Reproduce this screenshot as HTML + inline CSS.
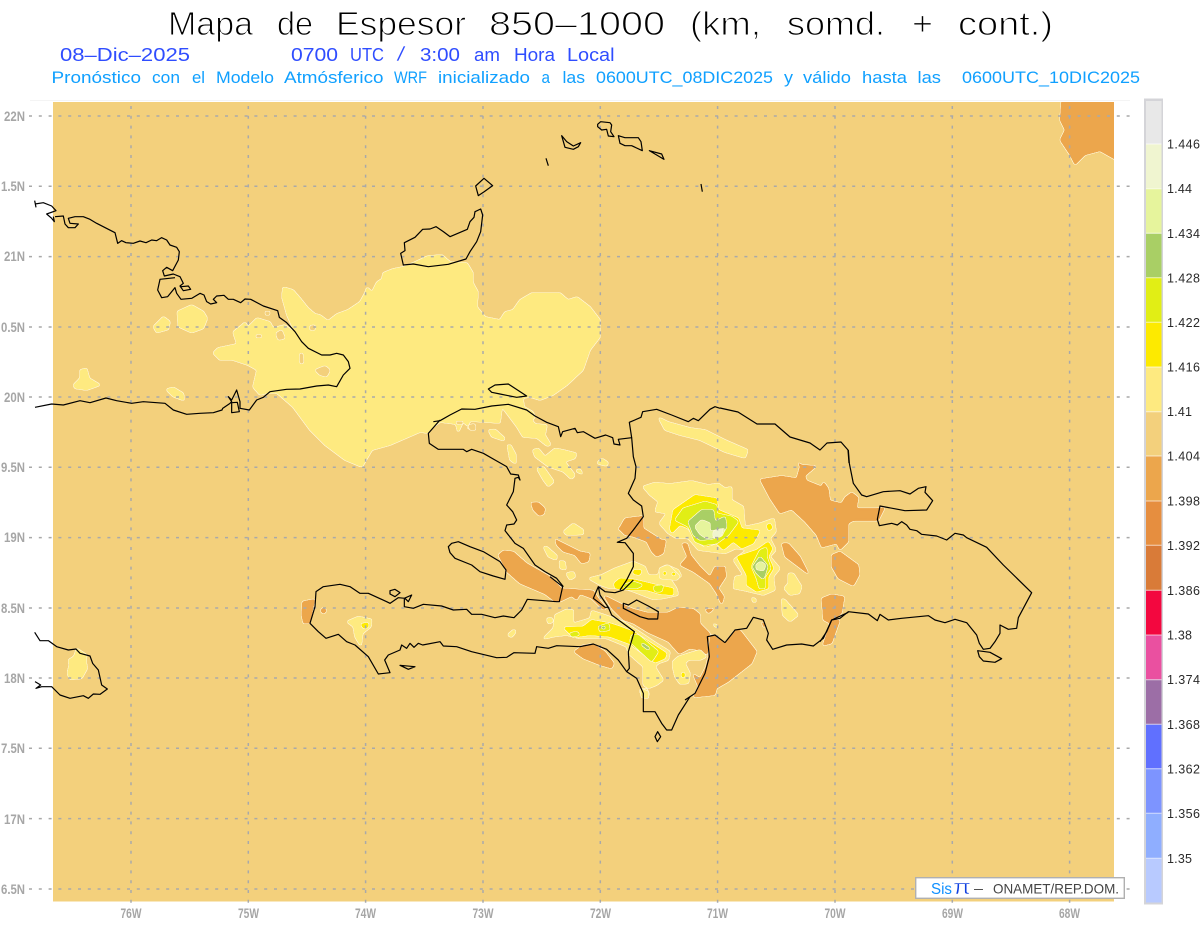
<!DOCTYPE html>
<html lang="es"><head><meta charset="utf-8"><title>Mapa de Espesor 850-1000</title>
<style>
html,body{margin:0;padding:0;background:#fff;width:1200px;height:927px;overflow:hidden}
svg{display:block}
text{font-family:"Liberation Sans",sans-serif}
.s polygon{filter:url(#sm3)}
.s>polygon{filter:url(#sm1)}
.b{fill:#f3d07c}.y{fill:#feea80}.o{fill:#eca64c}.Y{fill:#fdea00}.l{fill:#e1ee15}.g{fill:#a9cf65}.p{fill:#e6f49c}.w{fill:#eff4cf}
.c polyline,.c polygon{fill:none;stroke:#000;stroke-width:1.2;vector-effect:non-scaling-stroke;stroke-linejoin:round}
.ax{font-weight:bold;font-size:14px;fill:#a6a6a6}
.cb{font-size:12.5px;fill:#2a2a2a}
</style></head><body>
<svg width="1200" height="927" viewBox="0 0 1200 927" xmlns="http://www.w3.org/2000/svg">
<defs>
<filter id="sm1" x="-30%" y="-30%" width="160%" height="160%" color-interpolation-filters="sRGB">
<feGaussianBlur in="SourceGraphic" stdDeviation="1.1" result="b"/>
<feComponentTransfer in="b" result="shape"><feFuncA type="linear" slope="12" intercept="-4.6"/></feComponentTransfer>
<feMorphology in="shape" operator="dilate" radius=".55" result="d"/>
<feFlood flood-color="#fff6d8"/><feComposite in2="d" operator="in" result="e"/>
<feMerge><feMergeNode in="e"/><feMergeNode in="shape"/></feMerge>
</filter>
<filter id="sm3" x="-30%" y="-30%" width="160%" height="160%" color-interpolation-filters="sRGB">
<feGaussianBlur in="SourceGraphic" stdDeviation="3.3" result="b"/>
<feComponentTransfer in="b" result="shape"><feFuncA type="linear" slope="12" intercept="-4.6"/></feComponentTransfer>
<feMorphology in="shape" operator="dilate" radius="1.6" result="d"/>
<feFlood flood-color="#fff6d8"/><feComposite in2="d" operator="in" result="e"/>
<feMerge><feMergeNode in="e"/><feMergeNode in="shape"/></feMerge>
</filter>
<clipPath id="m"><rect x="53" y="102" width="1061" height="800"/></clipPath>
</defs>
<rect width="1200" height="927" fill="#fff"/>
<g font-size="33" fill="#000" stroke="#fff" stroke-width="1">
<text x="168" y="35" textLength="85" lengthAdjust="spacingAndGlyphs">Mapa</text>
<text x="277" y="35" textLength="36" lengthAdjust="spacingAndGlyphs">de</text>
<text x="336" y="35" textLength="130" lengthAdjust="spacingAndGlyphs">Espesor</text>
<text x="489" y="35" textLength="176" lengthAdjust="spacingAndGlyphs">850–1000</text>
<text x="690" y="35" textLength="71" lengthAdjust="spacingAndGlyphs">(km,</text>
<text x="787" y="35" textLength="98" lengthAdjust="spacingAndGlyphs">somd.</text>
<text x="912" y="35" textLength="21" lengthAdjust="spacingAndGlyphs">+</text>
<text x="958" y="35" textLength="95" lengthAdjust="spacingAndGlyphs">cont.)</text>
</g>
<g font-size="18" fill="#2f4dff">
<text x="60" y="61" textLength="130" lengthAdjust="spacingAndGlyphs">08–Dic–2025</text>
<text x="291" y="61" textLength="47" lengthAdjust="spacingAndGlyphs">0700</text>
<text x="350" y="61" textLength="34" lengthAdjust="spacingAndGlyphs">UTC</text>
<text x="396" y="61" font-size="20" stroke="#fff" stroke-width=".6" textLength="10" lengthAdjust="spacingAndGlyphs">/</text>
<text x="420" y="61" textLength="40" lengthAdjust="spacingAndGlyphs">3:00</text>
<text x="474" y="61" textLength="26" lengthAdjust="spacingAndGlyphs">am</text>
<text x="514" y="61" textLength="41" lengthAdjust="spacingAndGlyphs">Hora</text>
<text x="567" y="61" textLength="47.5" lengthAdjust="spacingAndGlyphs">Local</text>
</g>
<g font-size="16.5" fill="#10a0ff">
<text x="51.5" y="83" textLength="89.5" lengthAdjust="spacingAndGlyphs">Pronóstico</text>
<text x="152" y="83" textLength="28" lengthAdjust="spacingAndGlyphs">con</text>
<text x="192" y="83" textLength="13" lengthAdjust="spacingAndGlyphs">el</text>
<text x="216" y="83" textLength="58" lengthAdjust="spacingAndGlyphs">Modelo</text>
<text x="284" y="83" textLength="99.5" lengthAdjust="spacingAndGlyphs">Atmósferico</text>
<text x="394" y="83" textLength="33" lengthAdjust="spacingAndGlyphs">WRF</text>
<text x="438" y="83" textLength="92" lengthAdjust="spacingAndGlyphs">inicializado</text>
<text x="541.5" y="83" textLength="8.5" lengthAdjust="spacingAndGlyphs">a</text>
<text x="562.5" y="83" textLength="22.5" lengthAdjust="spacingAndGlyphs">las</text>
<text x="596" y="83" textLength="177" lengthAdjust="spacingAndGlyphs">0600UTC_08DIC2025</text>
<text x="784" y="83" textLength="9" lengthAdjust="spacingAndGlyphs">y</text>
<text x="803" y="83" textLength="48" lengthAdjust="spacingAndGlyphs">válido</text>
<text x="862" y="83" textLength="45" lengthAdjust="spacingAndGlyphs">hasta</text>
<text x="917.5" y="83" textLength="23.5" lengthAdjust="spacingAndGlyphs">las</text>
<text x="962" y="83" textLength="178" lengthAdjust="spacingAndGlyphs">0600UTC_10DIC2025</text>
</g>
<path d="M30 100.5H1130" stroke="#f4f4f4" stroke-width="1"/>
<rect x="53" y="102" width="1061" height="799.5" fill="#f3d07c"/>

<!-- contour fills -->
<g class="s" clip-path="url(#m)">
<polygon class="o" points="1062,95 1060,120 1065,130 1060,140 1070,155 1075,165 1085,155 1100,151 1125,165 1125,95"/>
<polygon class="y" points="213,353 218,348 237,344 233,332 242,325 245,322 248,327 257,318 270,322 273,328 285,325 295,333 287,315 282,297 283,287 293,290 300,298 308,308 315,314 320,315 328,321 337,314 348,310 360,302 365,293 367,287 372,292 377,282 382,279 383,273 393,269 403,267 413,263 428,256 442,255 450,262 467,263 473,273 473,283 478,292 477,307 485,317 500,320 505,312 513,310 520,300 532,293 545,293 560,293 568,300 577,297 590,307 600,320 600,337 590,350 583,370 567,385 553,395 540,400 530,397 523,398 524,407 533,412 535,417 532,420 535,424 547,425 545,435 551,445 547,446 537,438 523,437 517,427 502,407 500,423 470,421 467,428 474,431 463,422 458,433 456,424 440,422 433,427 428,433 420,432 390,445 372,450 362,467 345,460 325,445 310,430 293,407 277,393 267,393 260,395 253,387 257,370 248,365 233,360 220,360"/>
<g transform="translate(0,190) scale(.33333)">
<polygon class="y" points="460,410 490,380 510,395 505,418 470,428"/>
<polygon class="y" points="532,365 575,345 610,365 622,385 610,415 575,428 535,410"/>
<polygon class="y" points="220,585 240,565 240,540 260,535 268,565 302,585 260,600 225,595"/>
<polygon class="y" points="498,598 520,592 550,610 553,632 520,620"/>
<polygon class="b" points="945,540 975,528 990,540 980,560 960,555"/>
<polygon class="b" points="828,430 845,420 855,445 835,450"/>
<polygon class="b" points="795,365 810,365 808,375 797,375"/>
<polygon class="b" points="900,490 908,490 910,520 900,520"/>
<polygon class="b" points="930,408 945,405 945,420 930,420"/>
<polygon class="b" points="768,435 785,435 785,442 768,442"/>
</g>
<g transform="translate(0,620) scale(.33333)">
<polygon class="y" points="230,85 260,105 258,125 262,145 245,175 210,178 202,160 208,135 205,120 222,110"/>
</g>
<polygon class="y" points="658,417 668,422 690,428 705,430 725,440 748,450 745,458 725,452 700,440 680,435 665,430"/>
<g transform="translate(420,370) scale(.33333)">
<polygon class="b" points="108,155 130,155 128,162 110,162"/>
<polygon class="b" points="145,165 165,162 167,180 150,180"/>
<polygon class="y" points="205,180 225,178 255,205 250,212 215,200"/>
<polygon class="y" points="262,225 272,225 288,255 288,282 270,270"/>
<polygon class="y" points="338,240 355,235 375,260 405,235 430,240 470,250 465,265 435,275 465,315 455,328 430,305 385,290 345,260"/>
<polygon class="y" points="350,295 370,290 402,335 385,350 370,330"/>
<polygon class="y" points="465,302 480,297 490,315"/>
<polygon class="y" points="530,280 545,265 565,278 560,288"/>
<polygon class="y" points="430,485 460,460 490,480 490,493 440,495"/>
<polygon class="y" points="370,530 380,530 412,558 408,570 385,560"/>
<polygon class="y" points="418,572 435,575 438,600 420,595"/>
<polygon class="y" points="438,610 460,605 467,620 450,630"/>
<polygon class="o" points="333,398 355,397 375,415 372,432 358,438 340,420"/>
<polygon class="o" points="402,490 410,510 450,530 480,545 510,550 505,575 485,580 465,555 430,545 410,525"/>
</g>
<g transform="translate(290,520) scale(.33333)">
<polygon class="o" points="625,105 640,92 670,95 710,130 780,170 815,205 910,212 925,235 950,265 940,270 905,235 870,222 860,240 845,228 810,245 795,245 765,222 690,190 650,155"/>
<polygon class="o" points="37,245 75,237 60,310 40,310 35,285"/>
<polygon class="o" points="93,268 100,263 108,268 108,276 100,281 93,276"/>
<polygon class="o" points="852,395 880,375 910,372 945,395 972,430 965,445 930,435 880,415"/>
<polygon class="y" points="895,175 935,165 975,145 1030,125 1065,140 1075,165 1105,165 1110,145 1130,135 1165,150 1175,170 1140,175 1160,205 1165,225 1120,235 1090,238 1030,215 1000,205 960,205 930,195"/>
<polygon class="Y" points="972,190 990,175 1030,178 1100,195 1150,205 1150,225 1110,222 1070,210 1020,210 975,205"/>
<polygon class="l" points="1000,195 1030,185 1060,195 1040,205 1005,205"/>
<polygon class="l" points="1090,200 1120,195 1115,215 1095,215"/>
<polygon class="Y" points="1030,150 1055,150 1050,165 1030,162"/>
<polygon class="Y" points="1120,155 1130,152 1132,162 1122,164"/>
<polygon class="Y" points="1145,158 1160,160 1158,168 1147,166"/>
<polygon class="y" points="757,358 790,325 795,285 830,268 850,270 850,310 900,295 905,272 945,285 1000,305 1040,330 1100,370 1140,395 1135,420 1105,430 1095,440 1120,480 1100,495 1075,505 1060,495 1060,440 1015,400 1010,380 950,355 870,355 830,345 790,350"/>
<polygon class="Y" points="820,322 880,320 905,300 960,310 990,320 1030,335 1130,400 1125,415 1095,428 1020,372 960,350 900,345 850,352"/>
<polygon class="l" points="838,340 860,335 870,345 845,350"/>
<polygon class="l" points="925,320 955,310 960,330 930,335"/>
<polygon class="l" points="1025,345 1045,345 1105,395 1085,425 1020,365"/>
<polygon class="g" points="1055,368 1080,385 1075,390 1055,375"/>
<polygon class="g" points="930,322 945,318 945,328"/>
<polygon class="y" points="770,295 785,293 790,305 775,312"/>
<polygon class="y" points="652,345 672,328 678,335 665,352"/>
<polygon class="y" points="170,305 205,290 245,298 243,320 218,340 213,380 195,350 190,320"/>
<polygon class="Y" points="212,312 235,308 235,322 220,325"/>
<polygon class="y" points="1048,510 1070,505 1078,525 1060,535"/>
</g>
<g transform="translate(600,460) scale(.33333)">
<polygon class="o" points="10,405 60,430 100,447 140,458 205,458 235,443 280,447 300,463 300,490 330,520 322,585 303,572 270,565 238,582 205,545 145,518 100,490 70,480 35,445"/>
<polygon class="o" points="345,525 375,550 405,510 420,510 470,575 455,610 385,665 350,685 345,705 280,712 295,680 278,640 300,655 318,620 325,590 330,525"/>
<polygon class="o" points="480,58 545,48 590,55 600,20 590,2 605,15 650,18 615,48 620,62 665,80 670,65 685,85 690,122 725,130 735,112 755,97 775,112 770,145 835,145 855,142 835,182 760,182 745,190 745,245 720,270 710,250 665,262 650,225 615,185 575,148 540,160 510,115"/>
<polygon class="o" points="695,285 720,275 775,315 778,345 760,378 715,355 695,320"/>
<polygon class="o" points="545,250 565,250 600,290 628,345 595,320 555,290"/>
<polygon class="o" points="245,250 262,250 272,285 300,320 330,350 345,320 375,320 378,350 355,385 372,410 365,435 350,400 330,370 280,335 240,315 262,290"/>
<polygon class="o" points="38,205 58,205 75,175 130,168 130,205 185,240 198,240 190,280 170,290 155,275 140,245 100,230 75,225 58,208"/>
<polygon class="o" points="665,415 695,403 733,410 725,460 700,480 720,480 695,550 668,557 690,490 670,480"/>
<polygon class="o" points="315,448 345,445 325,460"/>
<polygon class="o" points="482,480 497,495 492,505"/>
<polygon class="y" points="128,80 165,68 210,72 275,63 325,75 355,70 375,85 395,80 395,120 430,140 435,200 480,190 522,175 528,215 510,235 528,270 510,290 540,325 520,350 525,390 490,405 435,392 400,385 405,350 430,345 400,300 440,270 408,265 375,280 295,270 265,235 230,235 205,220 178,190 200,160 165,155 175,125 150,105"/>
<polygon class="Y" points="220,150 285,105 350,115 355,150 415,175 425,205 480,212 460,250 425,265 400,245 370,270 350,250 315,260 290,245 265,205 240,195 215,220 210,205"/>
<polygon class="Y" points="410,290 440,280 470,270 505,245 517,265 505,290 520,325 505,350 505,385 470,395 440,375 440,345"/>
<polygon class="Y" points="500,195 512,190 517,205 505,212"/>
<polygon class="l" points="225,180 250,145 315,125 350,135 350,160 395,170 415,185 385,225 350,250 310,255 285,245 265,200"/>
<polygon class="l" points="455,320 480,270 500,262 500,290 512,325 495,350 495,385 478,385 470,355"/>
<polygon class="g" points="265,185 305,150 340,150 345,185 375,170 380,200 365,225 335,237 300,240 280,225"/>
<polygon class="g" points="458,320 480,290 503,318 495,345 490,358 470,340"/>
<polygon class="p" points="285,200 305,180 330,190 330,215 375,205 365,228 320,235 300,222"/>
<polygon class="p" points="468,315 482,305 497,315 490,332 470,328"/>
<polygon class="w" points="340,215 370,205 362,230 340,232"/>
<polygon class="y" points="178,325 205,315 240,350 230,360 180,355"/>
<polygon class="Y" points="190,335 198,335 198,345 190,345"/>
<polygon class="Y" points="216,338 226,338 226,346 216,346"/>
<polygon class="y" points="565,340 580,340 605,380 598,400 570,405 552,385 565,370"/>
<polygon class="y" points="545,415 555,420 595,465 570,485 548,465"/>
<polygon class="y" points="335,488 350,495 358,505 345,500"/>
<polygon class="y" points="455,410 470,420 465,428 458,425"/>
<polygon class="y" points="218,605 235,590 265,580 300,570 320,590 300,600 265,600 255,610 270,640 265,670 240,672 225,650 218,620"/>
<polygon class="Y" points="245,638 254,638 254,652 245,652"/>
<polygon class="y" points="120,685 145,695 145,715 125,712"/>
</g>
</g>

<!-- grid -->
<g fill="none" stroke="#a9a9a9" stroke-width="1.5" stroke-dasharray="3 6.8">
<path d="M29 116H1134M29 186.3H1134M29 256.6H1134M29 327H1134M29 397H1134M29 467.3H1134M29 537.6H1134M29 608H1134M29 678H1134M29 748.3H1134M29 818.6H1134M29 889H1134"/>
<path d="M131 106V908M248.3 106V908M365.6 106V908M483 106V908M600.3 106V908M717.6 106V908M835 106V908M952.3 106V908M1069.6 106V908"/>
</g>

<!-- coastlines -->
<g class="c">
<g transform="translate(0,190) scale(.33333)">
<polyline points="104,32 108,52"/>
<polyline points="105,42 130,38 155,48 168,62 140,72 155,85 163,95 160,80"/>
<polyline points="165,80 190,78 195,102 205,113 225,113 235,102 210,100 205,85 225,80 250,80 270,88 290,100 345,128 353,160 365,152 378,158 400,160 420,153 438,158 455,150 470,152 485,143 500,150 510,165 530,172 538,185 535,210 518,242 500,232 488,242 493,258 520,252 540,260 550,280 540,288 550,302 572,298 565,288 543,290"/>
<polyline points="525,263 480,268 473,300 485,323 503,320 525,293 530,310 543,328 575,325 600,310 612,315 620,335 632,342 650,338 640,328 650,318 672,316 685,328 700,328 722,338 735,327 752,328 790,348 833,362 838,382 860,398 885,425 905,455 925,475 965,495 990,495 1010,490 1030,495 1045,515 1050,535 1030,555 1010,590 985,585 950,588 900,597 860,598 810,605 790,622 770,630 748,660 720,655 720,635 710,600 695,630 685,620 695,635 690,640 668,655 666,660 640,668 600,670 560,673 520,660 495,640 430,635 395,640 350,632 318,624 270,638 240,632 190,645 155,642 105,652"/>
<polygon points="695,638 695,668 718,665 712,637"/>
</g>
<g transform="translate(360,110) scale(.33333)">
<polygon points="130,465 122,430 135,422 133,398 165,382 188,358 210,357 228,350 250,365 270,380 322,358 330,335 342,322 345,305 362,297 368,315 362,365 350,395 330,425 318,447 265,463 205,470 160,462"/>
<polygon points="347,228 372,205 398,227 373,245 355,257"/>
<polyline points="558,145 565,167"/>
<polygon points="605,77 615,112 640,118 655,110 662,98 640,108 620,95"/>
<polygon points="713,43 722,35 750,38 755,45 752,65 762,80 745,78 740,58 725,60 713,50"/>
<polygon points="775,77 780,100 795,107 815,107 847,122 843,95 835,83 795,83"/>
<polygon points="868,122 905,132 912,148"/>
<polyline points="1023,222 1027,245"/>
</g>
<g transform="translate(420,370) scale(.33333)">
<polygon points="205,57 225,45 265,42 285,55 320,78 290,82 240,72 215,67"/>
<polyline points="40,155 60,152 90,135 125,117 165,118 215,108 265,103 320,120 345,138 380,157 415,170 422,200 428,185 465,175 472,188 490,185 525,205 557,195 578,203 582,222 600,225 595,208 635,203 628,157 663,142 668,125 710,118 755,135 805,155 820,145 835,152 870,118 885,110 900,115"/>
<polyline points="635,203 640,260 648,290 645,325 625,370 640,390 665,408 670,440 640,480 620,505 592,517 615,518 640,550 640,590 620,630 600,660"/>
<polyline points="60,150 25,190 28,220 55,238 130,238 140,245 155,238 190,250 225,270 260,290 272,312 295,315 300,330 295,322 285,325 280,365 275,375 260,405 278,425 290,450 282,462 260,465 255,482 285,520 310,535 345,585 375,605 410,625 430,650"/>
<polygon points="85,530 95,520 115,515 150,530 190,545 240,575 258,600 255,628 220,618 180,605 155,585 105,565 90,548"/>
</g>
<g transform="translate(290,520) scale(.33333)">
<polyline points="780,170 818,200 808,245 800,245 712,238 695,270 672,293 640,288 615,293 575,283 545,283 530,268 490,270 455,258 400,253 370,265 343,260 343,235 365,225 355,245 345,235 325,233 300,250 290,245 235,220 210,220 180,200 150,193 100,200 78,215 75,260 60,310 85,335 108,355 145,343 170,365 195,375 235,410 265,462 300,458 284,420 295,405 330,390 335,375 350,385 360,370 372,382 385,370 398,375 450,365 460,378 500,380 545,395 620,413 650,412 672,398 735,400 740,380 775,385 800,377 870,380 910,372 950,388 985,420 1010,455"/>
<polyline points="925,200 910,235 945,262 955,262 930,225 925,200 945,215 975,218 1000,210 1030,180"/>
<polyline points="955,262 965,285 1033,335 1015,395 1018,445 1010,455 1040,475 1060,520 1060,575 1095,575 1115,610 1130,630 1145,630 1165,585 1200,530"/>
<polygon points="300,212 315,208 330,218 315,230 300,222"/>
<polygon points="330,436 375,440 355,448"/>
<polygon points="1095,650 1103,635 1112,650 1102,665"/>
<polygon points="1000,250 1000,265 1050,290 1075,297 1103,297 1105,275 1075,258 1040,240 1015,255"/>
</g>
<g transform="translate(600,460) scale(.33333)">
<polyline points="255,720 285,700 315,640 328,590 322,530 345,525 375,548"/>
</g>
<polyline points="720,408 738,412 757,424 775,424 790,437 810,443 820,450 827,443 841,442 848,450 849,463"/>
<g transform="translate(820,440) scale(.33333)">
<polyline points="85,30 88,70 100,130 125,165 140,170 190,155 240,152 270,162 295,145 318,140 315,157 338,182 320,210 255,212 180,198 172,238 178,257 215,250 232,255 245,245 260,255 270,268 290,272 305,283 350,288 380,300 405,280 430,285 440,293 500,322 550,375 635,458 595,533 590,565 565,568 540,555 540,580 525,605 510,625 490,628 478,610 470,585 440,548 405,538 375,548 345,540 325,527 245,535 205,540 180,523 172,542 145,522 85,515 60,535 35,540 20,575 0,605"/>
<polygon points="473,632 510,637 545,656 525,667 490,663 478,650"/>
</g>
<g transform="translate(600,460) scale(.33333)">
<polyline points="375,548 405,510 440,505 460,472 490,480 505,520 500,540 518,568 560,555 605,552 640,558 670,535 695,480 745,457"/>
</g>
<g transform="translate(0,620) scale(.33333)">
<polyline points="104,37 120,62 145,62 170,80 205,90 228,87 240,100 270,108 278,130 295,150 305,195 322,207 300,223 280,222 265,235 250,227 210,235 180,225 155,200 125,200 108,205 122,195 105,185"/>
</g>
</g>

<!-- axis labels -->
<text class="ax" x="4" y="121" textLength="21" lengthAdjust="spacingAndGlyphs">22N</text>
<text class="ax" x="1" y="191" textLength="24" lengthAdjust="spacingAndGlyphs">1.5N</text>
<text class="ax" x="4" y="261" textLength="21" lengthAdjust="spacingAndGlyphs">21N</text>
<text class="ax" x="1" y="332" textLength="24" lengthAdjust="spacingAndGlyphs">0.5N</text>
<text class="ax" x="4" y="402" textLength="21" lengthAdjust="spacingAndGlyphs">20N</text>
<text class="ax" x="1" y="472" textLength="24" lengthAdjust="spacingAndGlyphs">9.5N</text>
<text class="ax" x="4" y="542" textLength="21" lengthAdjust="spacingAndGlyphs">19N</text>
<text class="ax" x="1" y="613" textLength="24" lengthAdjust="spacingAndGlyphs">8.5N</text>
<text class="ax" x="4" y="683" textLength="21" lengthAdjust="spacingAndGlyphs">18N</text>
<text class="ax" x="1" y="753" textLength="24" lengthAdjust="spacingAndGlyphs">7.5N</text>
<text class="ax" x="4" y="824" textLength="21" lengthAdjust="spacingAndGlyphs">17N</text>
<text class="ax" x="1" y="894" textLength="24" lengthAdjust="spacingAndGlyphs">6.5N</text>
<text class="ax" x="120.5" y="918" textLength="21" lengthAdjust="spacingAndGlyphs">76W</text>
<text class="ax" x="238" y="918" textLength="21" lengthAdjust="spacingAndGlyphs">75W</text>
<text class="ax" x="355" y="918" textLength="21" lengthAdjust="spacingAndGlyphs">74W</text>
<text class="ax" x="472.5" y="918" textLength="21" lengthAdjust="spacingAndGlyphs">73W</text>
<text class="ax" x="590" y="918" textLength="21" lengthAdjust="spacingAndGlyphs">72W</text>
<text class="ax" x="707" y="918" textLength="21" lengthAdjust="spacingAndGlyphs">71W</text>
<text class="ax" x="824.5" y="918" textLength="21" lengthAdjust="spacingAndGlyphs">70W</text>
<text class="ax" x="942" y="918" textLength="21" lengthAdjust="spacingAndGlyphs">69W</text>
<text class="ax" x="1059" y="918" textLength="21" lengthAdjust="spacingAndGlyphs">68W</text>

<!-- credit box -->
<rect x="915.7" y="877.7" width="208.6" height="20.6" fill="#fff" stroke="#b0b0b0" stroke-width="1.4"/>
<text x="931" y="894" font-size="15.5" fill="#1090ff" textLength="21" lengthAdjust="spacingAndGlyphs">Sis</text>
<text x="953" y="894" font-size="20" fill="#1040e0" stroke="#fff" stroke-width=".5" textLength="18" lengthAdjust="spacingAndGlyphs">π</text>
<text x="974" y="893" font-size="14" fill="#444" textLength="9" lengthAdjust="spacingAndGlyphs">–</text>
<text x="993" y="893.5" font-size="14" fill="#444" textLength="126" lengthAdjust="spacingAndGlyphs">ONAMET/REP.DOM.</text>

<!-- colour bar -->
<rect x="1144" y="98.5" width="19" height="806" fill="#d4d4d8"/>
<g shape-rendering="crispEdges">
<rect x="1146" y="101" width="15.5" height="43" fill="#e8e8e8"/>
<rect x="1146" y="144" width="15.5" height="44.7" fill="#f0f5d0"/>
<rect x="1146" y="188.7" width="15.5" height="44.6" fill="#e6f49c"/>
<rect x="1146" y="233.3" width="15.5" height="44.4" fill="#a9cf65"/>
<rect x="1146" y="277.7" width="15.5" height="44.6" fill="#e1ee15"/>
<rect x="1146" y="322.3" width="15.5" height="44.7" fill="#fdea00"/>
<rect x="1146" y="367" width="15.5" height="44.7" fill="#feea80"/>
<rect x="1146" y="411.7" width="15.5" height="44.3" fill="#f3d07c"/>
<rect x="1146" y="456" width="15.5" height="45" fill="#eca64c"/>
<rect x="1146" y="501" width="15.5" height="44.3" fill="#e68e3f"/>
<rect x="1146" y="545.3" width="15.5" height="45" fill="#d97b38"/>
<rect x="1146" y="590.3" width="15.5" height="44.7" fill="#f3073f"/>
<rect x="1146" y="635" width="15.5" height="44.7" fill="#ea50a0"/>
<rect x="1146" y="679.7" width="15.5" height="44.6" fill="#9c6ea6"/>
<rect x="1146" y="724.3" width="15.5" height="44.4" fill="#6070ff"/>
<rect x="1146" y="768.7" width="15.5" height="44.6" fill="#7d94ff"/>
<rect x="1146" y="813.3" width="15.5" height="45" fill="#8faeff"/>
<rect x="1146" y="858.3" width="15.5" height="44" fill="#b8caff"/>
</g>
<path d="M1146 144H1161.5M1146 188.7H1161.5M1146 233.3H1161.5M1146 277.7H1161.5M1146 322.3H1161.5M1146 367H1161.5M1146 411.7H1161.5M1146 456H1161.5M1146 501H1161.5M1146 545.3H1161.5M1146 590.3H1161.5M1146 635H1161.5M1146 679.7H1161.5M1146 724.3H1161.5M1146 768.7H1161.5M1146 813.3H1161.5M1146 858.3H1161.5" stroke="#fff" stroke-opacity=".65" stroke-width="1"/>
<g class="cb">
<text x="1167" y="148.5" textLength="33" lengthAdjust="spacing">1.446</text>
<text x="1167" y="193" textLength="25" lengthAdjust="spacing">1.44</text>
<text x="1167" y="238" textLength="33" lengthAdjust="spacing">1.434</text>
<text x="1167" y="282.5" textLength="33" lengthAdjust="spacing">1.428</text>
<text x="1167" y="327" textLength="33" lengthAdjust="spacing">1.422</text>
<text x="1167" y="371.5" textLength="33" lengthAdjust="spacing">1.416</text>
<text x="1167" y="416" textLength="25" lengthAdjust="spacing">1.41</text>
<text x="1167" y="460.5" textLength="33" lengthAdjust="spacing">1.404</text>
<text x="1167" y="505.5" textLength="33" lengthAdjust="spacing">1.398</text>
<text x="1167" y="550" textLength="33" lengthAdjust="spacing">1.392</text>
<text x="1167" y="595" textLength="33" lengthAdjust="spacing">1.386</text>
<text x="1167" y="639.5" textLength="25" lengthAdjust="spacing">1.38</text>
<text x="1167" y="684" textLength="33" lengthAdjust="spacing">1.374</text>
<text x="1167" y="729" textLength="33" lengthAdjust="spacing">1.368</text>
<text x="1167" y="773.5" textLength="33" lengthAdjust="spacing">1.362</text>
<text x="1167" y="818" textLength="33" lengthAdjust="spacing">1.356</text>
<text x="1167" y="863" textLength="25" lengthAdjust="spacing">1.35</text>
</g>
</svg>
</body></html>
